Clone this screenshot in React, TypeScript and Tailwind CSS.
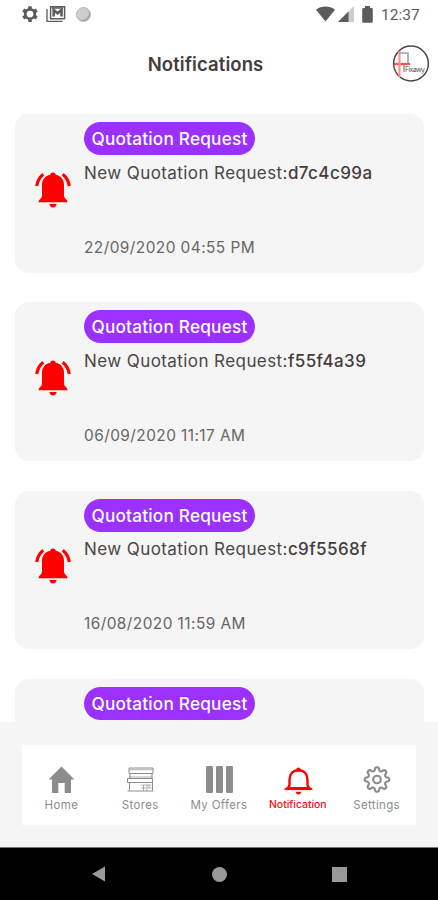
import type { ReactNode } from "react";

const notifications = [
  { code: "d7c4c99a", date: "22/09/2020 04:55 PM" },
  { code: "f55f4a39", date: "06/09/2020 11:17 AM" },
  { code: "c9f5568f", date: "16/08/2020 11:59 AM" },
  { code: "", date: "" },
];

// Eight rounded teeth around the centre of a 30x30 box
const gearPath =
  Array.from({ length: 96 }, (_, i) => {
    const a = (i / 96) * Math.PI * 2;
    const r = 10.6 + 1.7 * Math.tanh(2 * Math.cos(a * 8));
    return `${i ? "L" : "M"}${(15 + r * Math.sin(a)).toFixed(2)} ${(14.5 - r * Math.cos(a)).toFixed(2)}`;
  }).join("") + "Z";

function StatusBar() {
  return (
    <div className="flex h-7 shrink-0 items-center justify-between pl-[21px] pr-[17px] text-[#5c5c5c]">
      <div className="flex items-center">
        <svg className="h-[18px] w-[18px]" viewBox="0 0 24 24" fill="none" stroke="currentColor">
          <circle cx="12" cy="12" r="6.300" strokeWidth="3.600" />
          <path d="M12 1.500v4M12 18.500v4M2.900 6.750l3.500 2M17.600 15.250l3.500 2M2.900 17.250l3.500-2M17.600 8.750l3.500-2" strokeWidth="4.800" />
        </svg>
        <svg className="ml-[7px] h-[18px] w-5" viewBox="0 0 20 18" fill="none" stroke="currentColor">
          <path d="M1 4v12.300h15.500" strokeWidth="1.300" />
          <path d="M4.600 1.700h14v12h-14z" strokeWidth="1.500" />
          <path d="M7.700 11.500V5l3.900 3.300L15.500 5v6.500" strokeWidth="2.600" />
          <path d="M6 3h11" strokeWidth="1.500" />
        </svg>
        <span className="ml-[10px] h-[15px] w-[15px] rounded-full border border-[#b5b5b5] bg-[#cfcfcf] shadow-[inset_-1px_-1px_1px_#999]" />
      </div>
      <div className="flex items-center">
        <svg className="h-4 w-[19px]" viewBox="0 0 19 16" fill="currentColor">
          <path d="M0 3.700C5.200-.5 13.800-.5 19 3.700L9.500 15.500z" />
        </svg>
        <svg className="ml-[3px] h-4 w-4" viewBox="0 0 16 16">
          <path d="M0 16 16 0v16z" fill="#cdcdcd" />
          <path d="M0 16 10.500 5.500V16z" fill="#5c5c5c" />
        </svg>
        <svg className="ml-[8px] h-[17px] w-[11px]" viewBox="0 0 11 17" fill="currentColor">
          <path d="M3 0h5v2h1.500q1.300 0 1.300 1.300v12.200q0 1.300-1.300 1.300h-8Q.2 16.800.2 15.500V3.300Q.2 2 1.500 2H3z" />
        </svg>
        <span className="ml-[8px] w-[40px] whitespace-nowrap pt-px font-[Roboto,sans-serif] text-[15.500px] leading-5">12:37</span>
      </div>
    </div>
  );
}

function Logo() {
  return (
    <svg className="h-[38px] w-[38px]" viewBox="0 0 38 38" fill="none">
      <circle cx="19" cy="18.500" r="17.400" stroke="#4f4747" strokeWidth="1.500" />
      <path d="M7 8h9v10M12 19v8" stroke="#777" strokeWidth="1.100" />
      <path d="M2 19h16" stroke="#ff5050" strokeWidth="2.200" />
      <path d="M7.500 6v26" stroke="#ff8f8f" strokeWidth="2.200" />
      <text x="13" y="27" fill="#555" fontFamily="Inter, sans-serif" fontSize="7" textLength="20">
        Fixawy
      </text>
    </svg>
  );
}

function Header() {
  return (
    <header className="relative flex h-[72px] shrink-0 items-center justify-center pr-[27px] pt-px">
      <h1 className="pt-px text-[18.500px] font-semibold tracking-[0.090px] text-[#453c3c]">Notifications</h1>
      <div className="absolute right-2 top-[17px]">
        <Logo />
      </div>
    </header>
  );
}

function RingingBell() {
  return (
    <svg className="h-9 w-9" viewBox="0 0 36 36" fill="#ff0000">
      <path d="M18 .4a2.800 2.800 0 0 0-2.800 2.400C10 4 7 7.800 7 12.500v11.300q0 1.800-2 3.400-1.500 1.200-1.500 3h29q0-1.800-1.500-3-2-1.600-2-3.400V12.500c0-4.700-3-8.500-8.200-9.700A2.800 2.800 0 0 0 18 .4z" />
      <path d="M14.300 32h7.400q-1 3.500-3.700 3.500T14.300 32z" />
      <path d="M8.300 2.200Q2.700 6.800 1.700 14M27.700 2.200q5.600 4.600 6.600 11.800" fill="none" stroke="#ff0000" strokeWidth="3.100" />
    </svg>
  );
}

function NotificationCard({ code, date }: { code: string; date: string }) {
  return (
    <article className="flex h-[158.500px] shrink-0 rounded-[14px] bg-[#f5f5f5]">
      <div className="w-[69.500px] shrink-0 pl-5 pt-[57.500px]">
        <RingingBell />
      </div>
      <div className="flex flex-col items-start pt-2">
        <span className="flex h-[33px] w-[171px] items-center justify-center whitespace-nowrap rounded-full bg-[#9b30ff] pt-px text-[17.200px] font-medium tracking-[0.220px] text-white">
          Quotation Request
        </span>
        {code && (
          <>
            <p className="mt-[5.500px] whitespace-nowrap text-[17px] leading-6 tracking-[0.420px] text-[#4a4545]">
              New Quotation Request:
              <span className="font-medium text-[#453c3c]">{code}</span>
            </p>
            <time className="mt-[51px] whitespace-nowrap text-[15.400px] leading-6 tracking-[0.450px] text-[#666] [font-kerning:none]">{date}</time>
          </>
        )}
      </div>
    </article>
  );
}

function NavItem({ label, active, children }: { label: string; active?: boolean; children: ReactNode }) {
  return (
    <div className={`flex w-[78.800px] flex-col items-center pt-5 ${active ? "text-[#f50f0f]" : "text-[#8c8c8c]"}`}>
      {children}
      <span className={`mt-[2px] whitespace-nowrap leading-4 ${active ? "text-[10.400px] font-medium" : "text-[11.500px] tracking-[0.350px]"}`}>
        {label}
      </span>
    </div>
  );
}

function BottomNav() {
  return (
    <div className="h-[125px] shrink-0 bg-[#f5f5f5] px-[22px] pt-[23px]">
      <nav className="flex h-20 bg-white">
        <NavItem label="Home">
          <svg className="h-[30px] w-[30px]" viewBox="0 0 30 30" fill="currentColor">
            <path d="M15.500 1.500 28.500 14.500H25V28h-6.300V18h-6.400v10H6V14.500H2.500z" />
          </svg>
        </NavItem>
        <NavItem label="Stores">
          <svg className="h-[30px] w-[30px]" viewBox="0 0 30 30" fill="none" stroke="currentColor" strokeWidth="1">
            <path d="M4 3h24v5.500H4zM5 8.500v5M27 8.500v5M2.500 13.500h25v4h-25zM4.500 17.500v8M27.500 17.500v8M2.500 26h26" />
            <path d="M4 4.700h24M4 12h23M16.500 20h10M18.500 20v6M22 20v6M16.500 23h5M23.500 23h3M24 20v3" strokeWidth=".7" />
          </svg>
        </NavItem>
        <NavItem label="My Offers">
          <svg className="h-[30px] w-[30px]" viewBox="0 0 30 30" fill="currentColor">
            <rect x="2" y="1" width="7" height="27" rx="1.200" />
            <rect x="12" y="1" width="7" height="27" rx="1.200" />
            <rect x="22" y="1" width="7" height="27" rx="1.200" />
          </svg>
        </NavItem>
        <NavItem label="Notification" active>
          <svg className="h-[30px] w-[30px]" viewBox="0 0 30 30" fill="none" stroke="#ff0000" strokeWidth="2.400">
            <path d="M6.500 19.500V15c0-6 3.300-9.800 9-9.800s9 3.800 9 9.800v4.500q0 2.500 2 3.800H4.500q2-1.300 2-3.800z" />
            <path d="M2.500 24h26" strokeWidth="2.200" />
            <circle cx="15.500" cy="4.600" r="2.200" fill="#ff0000" stroke="none" />
            <path d="M12.500 26.700h6q-.7 2.700-3 2.700t-3-2.700z" fill="#ff0000" stroke="none" />
          </svg>
        </NavItem>
        <NavItem label="Settings">
          <svg className="h-[30px] w-[30px]" viewBox="0 0 30 30" fill="none" stroke="currentColor" strokeWidth="2.100" strokeLinejoin="round">
            <path d={gearPath} />
            <circle cx="15" cy="14.500" r="3.800" />
          </svg>
        </NavItem>
      </nav>
    </div>
  );
}

export default function App() {
  return (
    <div className="flex h-[900px] w-[438px] flex-col overflow-hidden bg-white font-[Inter,sans-serif]">
      <StatusBar />
      <Header />
      <main className="flex min-h-0 flex-1 flex-col gap-[29.800px] overflow-hidden px-[14.500px] pt-[14px]">
        {notifications.map((item, i) => (
          <NotificationCard key={i} code={item.code} date={item.date} />
        ))}
      </main>
      <BottomNav />
      {/* Android system buttons */}
      <div className="flex h-[53px] shrink-0 items-center justify-between border-t border-[#777] bg-black pl-[91px] pr-[91px]">
        <svg className="h-4 w-[15px]" viewBox="0 0 15 16" fill="#999">
          <path d="M1 8 14 .5v15z" />
        </svg>
        <span className="h-[15px] w-[15px] rounded-full bg-[#999]" />
        <span className="h-[15px] w-[15px] bg-[#999]" />
      </div>
    </div>
  );
}
